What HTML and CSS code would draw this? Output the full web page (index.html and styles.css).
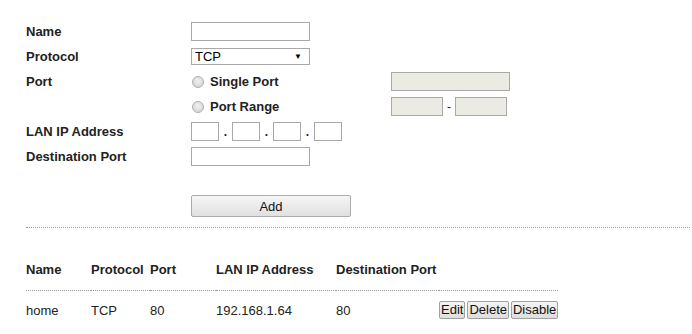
FILE: index.html
```html
<!DOCTYPE html>
<html lang="en">
<head>
    <meta charset="UTF-8">
    <meta name="viewport" content="width=device-width, initial-scale=1.0">
    <title>Port Forwarding</title>
    <link rel="stylesheet" href="styles.css">
</head>
<body>
    <div class="page">
        <div class="form">
            <label class="lbl" for="name">Name</label>
            <div class="field"><input type="text" id="name" class="txt"></div>
            <div class="extra"></div>

            <label class="lbl" for="protocol">Protocol</label>
            <div class="field">
                <span class="select-wrap">
                    <select id="protocol" class="sel">
                        <option>TCP</option>
                        <option>UDP</option>
                        <option>TCP/UDP</option>
                    </select>
                </span>
            </div>
            <div class="extra"></div>

            <span class="lbl">Port</span>
            <div class="field">
                <label class="radio"><input type="radio" name="portType"> Single Port</label>
            </div>
            <div class="extra"><input type="text" class="txt off" disabled></div>

            <span class="lbl"></span>
            <div class="field">
                <label class="radio"><input type="radio" name="portType"> Port Range</label>
            </div>
            <div class="extra">
                <input type="text" class="txt off short" disabled>
                <span class="sep dash">-</span>
                <input type="text" class="txt off short" disabled>
            </div>

            <span class="lbl">LAN IP Address</span>
            <div class="field ip">
                <input type="text" class="txt octet">
                <span class="sep">.</span>
                <input type="text" class="txt octet">
                <span class="sep">.</span>
                <input type="text" class="txt octet">
                <span class="sep">.</span>
                <input type="text" class="txt octet">
            </div>
            <div class="extra"></div>

            <label class="lbl" for="destPort">Destination Port</label>
            <div class="field"><input type="text" id="destPort" class="txt"></div>
            <div class="extra"></div>
        </div>

        <div class="actions">
            <button type="button" class="add-btn">Add</button>
        </div>

        <div class="divider"></div>

        <table class="rules">
            <colgroup>
                <col style="width: 65px">
                <col style="width: 59px">
                <col style="width: 66px">
                <col style="width: 120px">
                <col style="width: 103px">
                <col style="width: 119px">
            </colgroup>
            <thead>
                <tr>
                    <th>Name</th>
                    <th>Protocol</th>
                    <th>Port</th>
                    <th>LAN IP Address</th>
                    <th>Destination Port</th>
                    <th></th>
                </tr>
            </thead>
            <tbody>
                <tr>
                    <td>home</td>
                    <td>TCP</td>
                    <td>80</td>
                    <td>192.168.1.64</td>
                    <td>80</td>
                    <td>
                        <div class="row-btns">
                            <button type="button" class="mini-btn">Edit</button>
                            <button type="button" class="mini-btn">Delete</button>
                            <button type="button" class="mini-btn">Disable</button>
                        </div>
                    </td>
                </tr>
            </tbody>
        </table>
    </div>
</body>
</html>
```

FILE: styles.css
```css
body {
    font-family: "Liberation Sans", Arial, sans-serif;
    font-size: 13px;
    color: #222;
    background-color: #fff;
    margin: 0;
    padding: 0;
}

.page {
    padding: 19px 0 0 26px;
}

.form {
    display: grid;
    grid-template-columns: 165px 200px auto;
    grid-auto-rows: 25px;
    align-items: center;
}

.lbl {
    font-weight: bold;
}

.field,
.extra {
    display: flex;
    align-items: center;
}

.txt {
    box-sizing: border-box;
    width: 119px;
    height: 19px;
    margin: 0;
    padding: 0 3px;
    border: 1px solid #a9a9a9;
    background-color: #fff;
    font-family: inherit;
    font-size: 13px;
}

.txt.off {
    background-color: #ebebe4;
    border-color: #a9a9a9;
}

.txt.short {
    width: 52px;
}

.txt.octet {
    width: 28px;
}

.sep {
    width: 13px;
    text-align: center;
    font-weight: bold;
    font-size: 12px;
}

.sep.dash {
    width: 12px;
    font-weight: normal;
}

.select-wrap {
    position: relative;
    display: inline-block;
}

.select-wrap::after {
    content: "\25BC";
    position: absolute;
    right: 8px;
    top: 4px;
    font-size: 8px;
    color: #000;
    pointer-events: none;
}

.sel {
    appearance: none;
    -webkit-appearance: none;
    box-sizing: border-box;
    width: 119px;
    height: 17px;
    margin: 0;
    padding: 0 3px;
    border: 1px solid #a9a9a9;
    border-radius: 0;
    background-color: #fff;
    font-family: inherit;
    font-size: 13px;
    line-height: 15px;
    color: #000;
}

.radio {
    display: flex;
    align-items: center;
    gap: 6px;
    font-weight: bold;
}

.radio input {
    appearance: none;
    -webkit-appearance: none;
    width: 12px;
    height: 12px;
    margin: 0 0 0 1px;
    border: 1px solid #b0b0b0;
    border-radius: 50%;
    background: radial-gradient(circle at 50% 40%, #f2f2f2 0%, #d8d8d8 70%, #cacaca 100%);
}

.actions {
    padding: 26px 0 0 165px;
}

.add-btn {
    box-sizing: border-box;
    width: 160px;
    height: 22px;
    margin: 0;
    border: 1px solid #acacac;
    border-radius: 2px;
    background: linear-gradient(#f6f6f6, #e0e0e0);
    font-family: inherit;
    font-size: 13px;
    color: #111;
    cursor: pointer;
}

.divider {
    margin: 10px 2px 0 0;
    border-top: 1px dotted #999;
}

.rules {
    margin-top: 32px;
    border-collapse: collapse;
    table-layout: fixed;
    width: 532px;
}

.rules th {
    text-align: left;
    font-weight: bold;
    padding: 0 0 10px 0;
    height: 20px;
    line-height: 20px;
    border-bottom: 1px dotted #999;
}

.rules td {
    padding: 0;
    height: 38px;
    vertical-align: middle;
}

.row-btns {
    display: flex;
    gap: 2px;
}

.mini-btn {
    box-sizing: border-box;
    height: 18px;
    margin: 0;
    padding: 0 1px;
    border: 1px solid #a0a0a0;
    border-radius: 2px;
    background: linear-gradient(#f4f4f4, #dedede);
    font-family: inherit;
    font-size: 13px;
    line-height: 16px;
    color: #111;
    cursor: pointer;
}
```
